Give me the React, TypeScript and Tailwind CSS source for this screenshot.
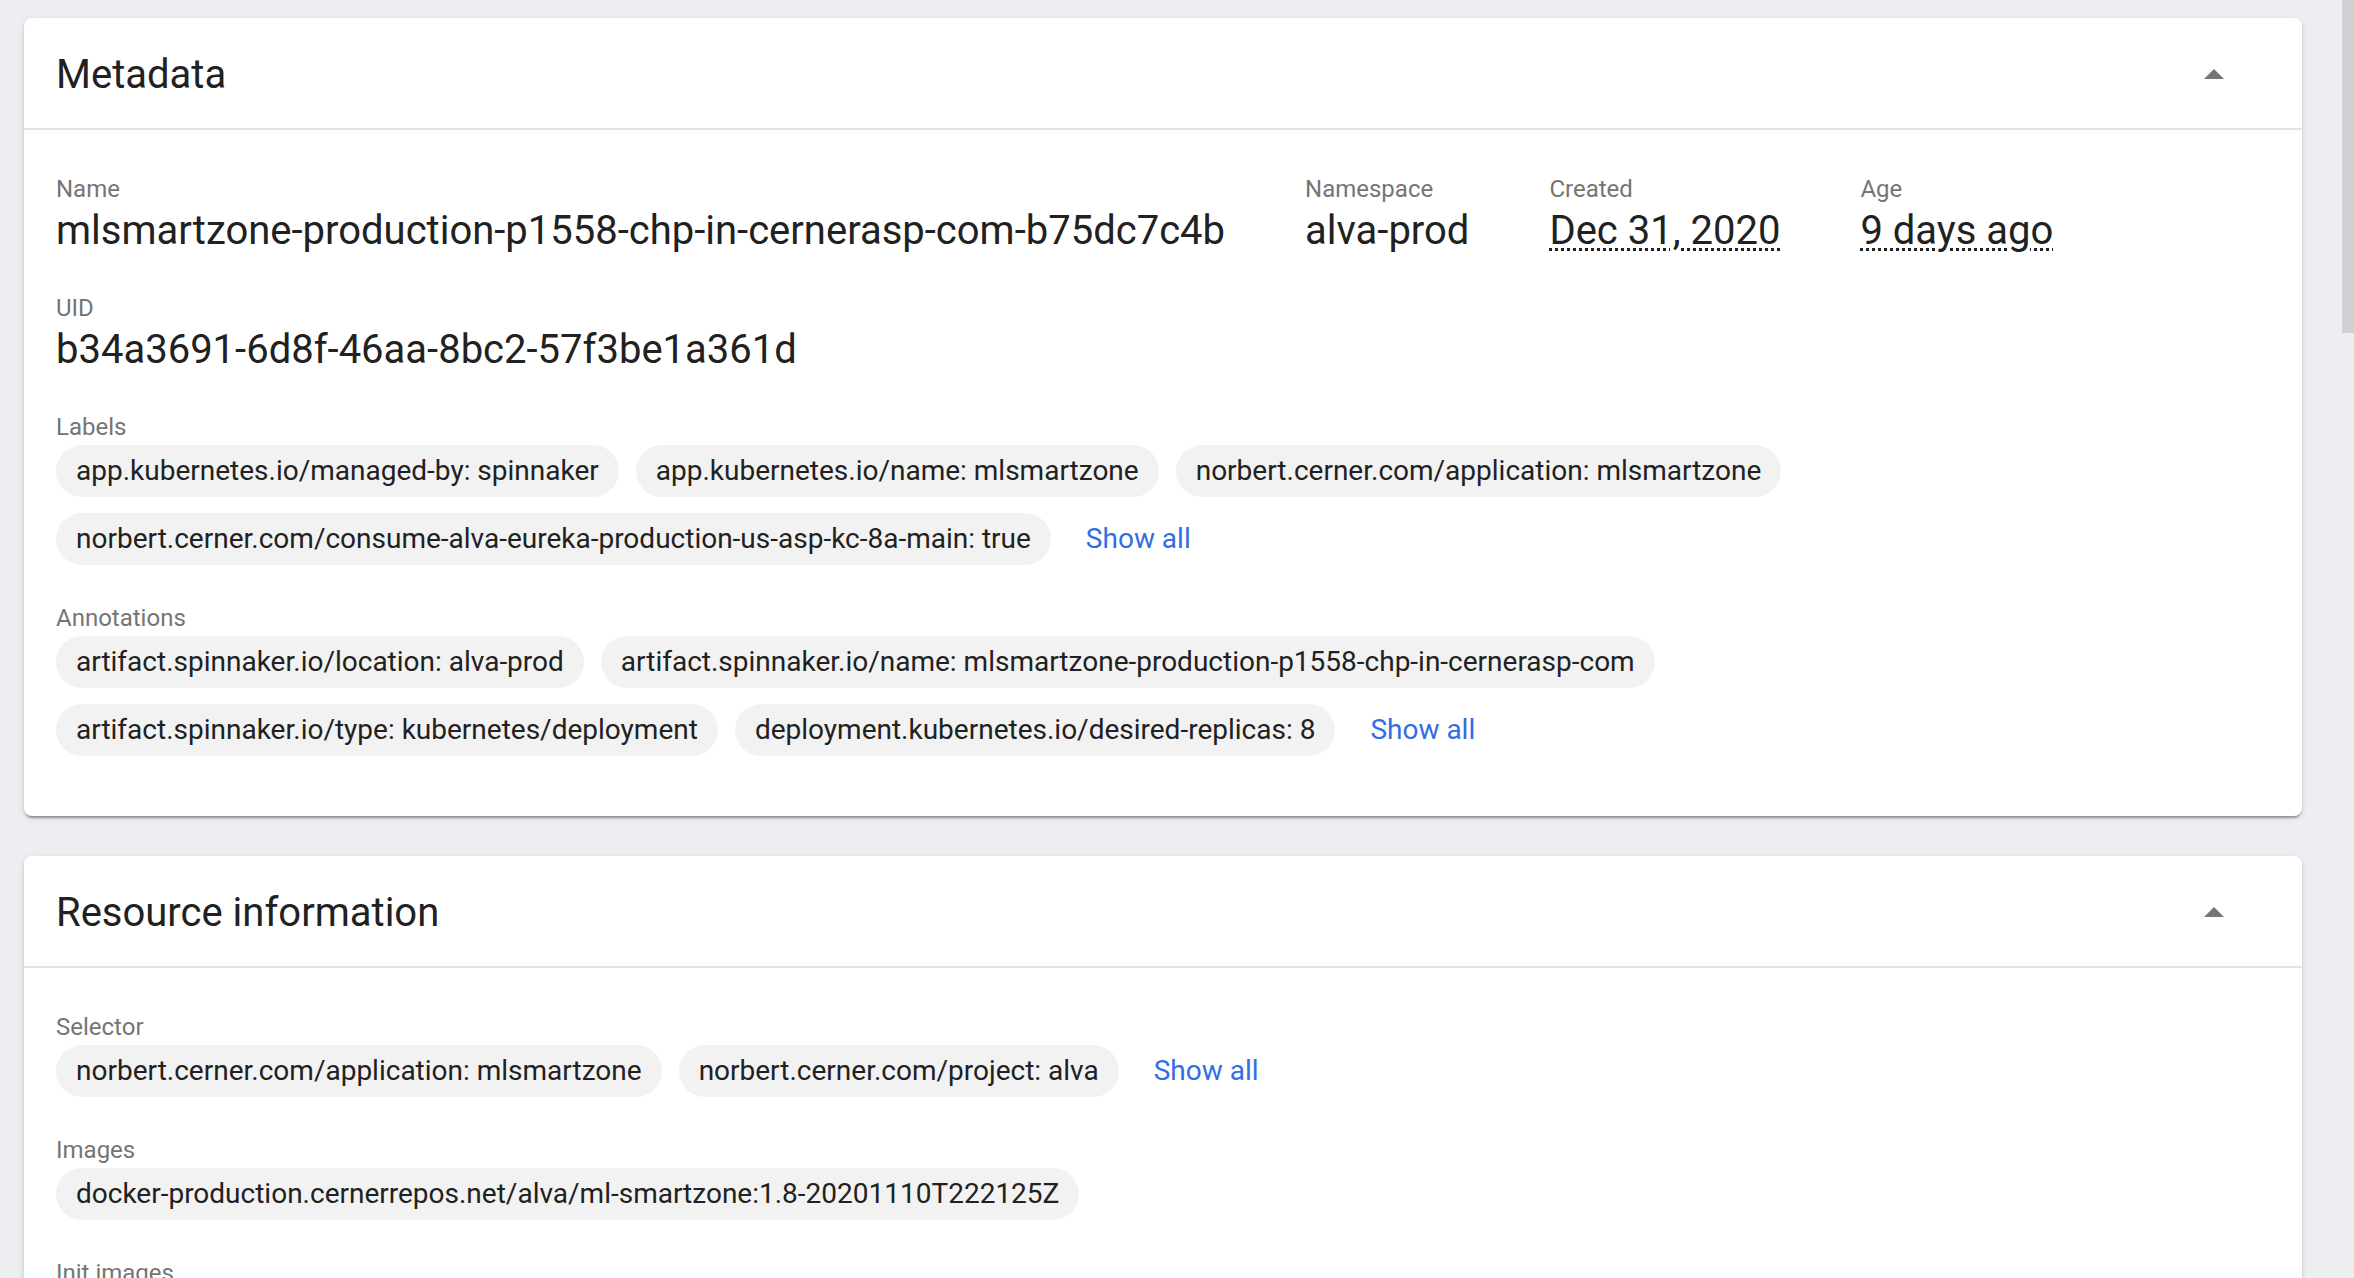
import type { ReactNode } from 'react';

const FONT = { fontFamily: 'Roboto, "Noto Sans", "Liberation Sans", sans-serif' };

function Card({ title, children }: { title: string; children: ReactNode }) {
  return (
    <section className="w-[2278px] rounded-[8px] bg-white shadow-[0_4px_2px_-2px_rgba(0,0,0,0.2),0_2px_2px_0_rgba(0,0,0,0.14),0_2px_6px_0_rgba(0,0,0,0.12)]">
      {/* Header */}
      <div className="flex h-[112px] items-center justify-between border-b-2 border-[#e3e3e3] pt-[4px] pl-[32px] pr-[64px]">
        <h2 className="text-[40px] font-normal leading-[48px] text-[#212121]">{title}</h2>
        <svg className="h-[48px] w-[48px]" viewBox="0 0 24 24" fill="#757575">
          <path d="M7 14l5-5 5 5z" />
        </svg>
      </div>
      {/* Body */}
      <div className="flex flex-col gap-[37px] px-[32px] pt-[43px] pb-[60px]">{children}</div>
    </section>
  );
}

function Property({ label, value, dotted }: { label: string; value: string; dotted?: boolean }) {
  return (
    <div className="flex flex-col">
      <span className="text-[24px] leading-[32px] text-[#757575]">{label}</span>
      <span
        className={
          dotted
            ? 'whitespace-nowrap pt-[2px] text-[40px] leading-[48px] text-[#212121] underline decoration-dotted decoration-[3px] underline-offset-[4px]'
            : 'whitespace-nowrap pt-[2px] text-[40px] leading-[48px] text-[#212121]'
        }
      >
        {value}
      </span>
    </div>
  );
}

function ChipList({ label, chips, showAll }: { label: string; chips: string[]; showAll?: boolean }) {
  return (
    <div className="flex flex-col">
      <span className="text-[24px] leading-[32px] text-[#757575]">{label}</span>
      <div className="mt-[2px] flex flex-wrap items-center gap-x-[17px] gap-y-[16px]">
        {chips.map((c) => (
          <span
            key={c}
            className="flex h-[52px] items-center whitespace-nowrap rounded-full bg-[#f2f2f2] px-[20px] text-[28px] text-[#212121]"
          >
            {c}
          </span>
        ))}
        {showAll && (
          <button type="button" className="ml-[18px] text-[28px] leading-[52px] text-[#326de6]">
            Show all
          </button>
        )}
      </div>
    </div>
  );
}

export default function App() {
  return (
    <div className="relative h-screen w-full overflow-hidden bg-[#eceef1]" style={FONT}>
      <div className="flex flex-col gap-[40px] pt-[18px] pl-[24px]">
        <Card title="Metadata">
          <div className="flex gap-[80px]">
            <Property label="Name" value="mlsmartzone-production-p1558-chp-in-cernerasp-com-b75dc7c4b" />
            <Property label="Namespace" value="alva-prod" />
            <Property label="Created" value="Dec 31, 2020" dotted />
            <Property label="Age" value="9 days ago" dotted />
          </div>
          <Property label="UID" value="b34a3691-6d8f-46aa-8bc2-57f3be1a361d" />
          <ChipList
            label="Labels"
            showAll
            chips={[
              'app.kubernetes.io/managed-by: spinnaker',
              'app.kubernetes.io/name: mlsmartzone',
              'norbert.cerner.com/application: mlsmartzone',
              'norbert.cerner.com/consume-alva-eureka-production-us-asp-kc-8a-main: true',
            ]}
          />
          <ChipList
            label="Annotations"
            showAll
            chips={[
              'artifact.spinnaker.io/location: alva-prod',
              'artifact.spinnaker.io/name: mlsmartzone-production-p1558-chp-in-cernerasp-com',
              'artifact.spinnaker.io/type: kubernetes/deployment',
              'deployment.kubernetes.io/desired-replicas: 8',
            ]}
          />
        </Card>

        <Card title="Resource information">
          <ChipList
            label="Selector"
            showAll
            chips={['norbert.cerner.com/application: mlsmartzone', 'norbert.cerner.com/project: alva']}
          />
          <ChipList
            label="Images"
            chips={['docker-production.cernerrepos.net/alva/ml-smartzone:1.8-20201110T222125Z']}
          />
          <ChipList label="Init images" chips={['docker-production.cernerrepos.net/alva/init']} />
        </Card>
      </div>

      {/* Scrollbar thumb */}
      <div className="absolute right-0 top-0 h-[333px] w-[12px] bg-[#cfd0d3]" />
    </div>
  );
}
